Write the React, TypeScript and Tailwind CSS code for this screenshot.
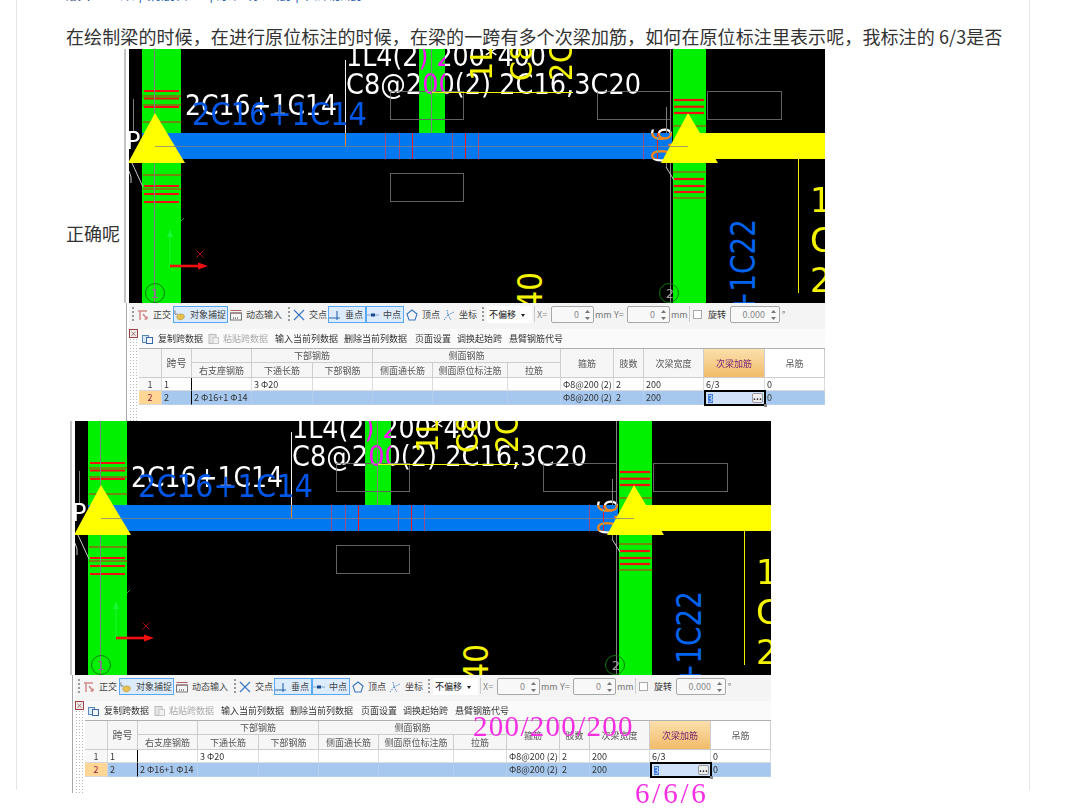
const cjk = "font-['Noto_Sans_CJK_SC','Liberation_Sans',sans-serif]";
const cad = "font-['DejaVu_Sans',sans-serif]";

function TriangleMark({ x }: { x: number }) {
  return <polygon points={`${x},64 ${x - 27},114 ${x + 30},114`} className="fill-[#ffff00]" />;
}

function Stripes({ x1, x2, thick, thin }: { x1: number; x2: number; thick: number[]; thin: number[] }) {
  return (
    <>
      {thin.map((y) => (
        <line key={y} x1={x1 - 1} x2={x2 + 2} y1={y} y2={y} className="stroke-[#e02020]" strokeWidth="1" />
      ))}
      {thick.map((y) => (
        <line key={y} x1={x1} x2={x2} y1={y} y2={y} className="stroke-[#f01010]" strokeWidth="2.2" />
      ))}
    </>
  );
}

function CadCanvas() {
  return (
    <svg viewBox="7 0 696 254" className="isolate block h-[254px] w-[696px] shrink-0">
      <rect x="7" y="0" width="696" height="254" fill="#000" />
      {/* columns */}
      <rect x="20" y="0" width="39" height="254" fill="#00f000" />
      <rect x="297" y="0" width="26" height="84" fill="#00f000" />
      <rect x="551" y="0" width="33" height="254" fill="#00f000" />

      <Stripes x1={22} x2={57} thick={[42, 49.5, 58, 137, 145, 153]} thin={[47, 56, 73, 126, 140]} />
      <Stripes x1={552} x2={582} thick={[51, 57.7, 64, 130, 137, 143]} thin={[77, 123, 137, 149]} />

      {/* outlines */}
      <g fill="none" className="stroke-[#626262]">
        <rect x="268.5" y="42.5" width="73" height="28" />
        <rect x="475.5" y="42.5" width="73" height="28" />
        <rect x="585.5" y="42.5" width="74" height="28" />
        <rect x="268.5" y="124.5" width="73" height="28" />
      </g>
      <line x1="32.5" x2="32.5" y1="0" y2="254" stroke="#808080" />
      <line x1="309.5" x2="309.5" y1="0" y2="97" stroke="#808080" />
      <line x1="548.5" x2="548.5" y1="0" y2="254" stroke="#808080" />
      <line x1="544.5" x2="544.5" y1="58" y2="118" stroke="#808080" />
      <line x1="11.5" x2="11.5" y1="50" y2="82" stroke="#808080" />
      <line x1="676.5" x2="676.5" y1="110" y2="244" stroke="#f0f000" />
      <line x1="223.5" x2="223.5" y1="11" y2="84" stroke="#f0f0f0" />

      {/* beam */}
      <rect x="20" y="84" width="530" height="26" fill="#0078f0" />
      <rect x="570" y="84" width="133" height="26" fill="#ffff00" />
      <line x1="223.5" x2="223.5" y1="84" y2="97" stroke="#f08020" />
      {[263, 277, 330, 356, 521].map((x) => (
        <line key={x} x1={x + 0.5} x2={x + 0.5} y1="84" y2="110" stroke="#9c4c80" />
      ))}
      {[290, 343, 535].map((x) => (
        <line key={x} x1={x + 0.5} x2={x + 0.5} y1="84" y2="110" stroke="#f01818" />
      ))}

      {/* white annotations, inverted over what they cross */}
      <g className={`${cad} fill-white mix-blend-difference`}>
        <text x="224" y="17" className="text-[29px]" textLength="200" lengthAdjust="spacingAndGlyphs">
          1L4(2) 200*400
        </text>
        <text x="224" y="45" className="text-[29px]" textLength="295" lengthAdjust="spacingAndGlyphs">
          C8@200(2) 2C16,3C20
        </text>
        <text x="63" y="66" className="text-[29px]" textLength="152" lengthAdjust="spacingAndGlyphs">
          2C16+1C14
        </text>
        <text
          x="550"
          y="114"
          transform="rotate(-90 550 114)"
          className="text-[28px]"
          textLength="36"
          lengthAdjust="spacingAndGlyphs"
        >
          0.6
        </text>
        <text x="4" y="100" className="text-[24px]">
          P
        </text>
      </g>

      <line x1="310" x2="451" y1="43.5" y2="43.5" stroke="#f4f400" />

      <g className={`${cad} fill-[#0056e6]`}>
        <text x="70" y="76" className="text-[32px]" textLength="175" lengthAdjust="spacingAndGlyphs">
          2C16+1C14
        </text>
        <text
          x="633"
          y="170"
          transform="rotate(-90 633 170)"
          textAnchor="end"
          className="fill-[#0064f0] text-[33px]"
          textLength="96"
          lengthAdjust="spacingAndGlyphs"
        >
          +1C22
        </text>
      </g>

      <g className={`${cad} fill-[#f4f400]`}>
        <text x="370" y="32" transform="rotate(-90 370 32)" className="text-[30px]" textLength="36" lengthAdjust="spacingAndGlyphs">
          1L
        </text>
        <text x="410" y="32" transform="rotate(-90 410 32)" className="text-[30px]" textLength="38" lengthAdjust="spacingAndGlyphs">
          C8
        </text>
        <text x="450" y="32" transform="rotate(-90 450 32)" className="text-[32px]" textLength="38" lengthAdjust="spacingAndGlyphs">
          2C
        </text>
        <text x="420" y="223" transform="rotate(-90 420 223)" textAnchor="end" className="text-[34px]" textLength="58" lengthAdjust="spacingAndGlyphs">
          C40
        </text>
        <text x="688" y="163" className="text-[34px]">
          1
        </text>
        <text x="688" y="203" className="text-[34px]">
          C
        </text>
        <text x="688" y="243" className="text-[34px]">
          2
        </text>
      </g>

      <TriangleMark x={33} />
      <TriangleMark x={566} />
      <line x1="33" x2="566" y1="97.5" y2="97.5" stroke="#808080" strokeOpacity="0.75" />

      {/* leader lines */}
      <path d="M10 114 L21 138 M544 118 L552 131" fill="none" stroke="#c8c8c8" />
      <path d="M7 122 Q10 128 9 134" fill="none" stroke="#c8c8c8" />

      {/* axis bubbles */}
      <circle cx="33" cy="244" r="9.5" fill="none" stroke="#0a7a0a" />
      <text x="33" y="249" textAnchor="middle" className={`${cad} fill-[#a060a0] text-[13px]`}>
        1
      </text>
      <circle cx="547" cy="244" r="9.5" fill="none" stroke="#0a7a0a" />
      <text x="548" y="249" textAnchor="middle" className={`${cad} fill-[#a0a0a0] text-[13px]`}>
        2
      </text>

      {/* ucs arrows */}
      <path d="M48 217 V181" stroke="#18f838" strokeWidth="1" />
      <path d="M48 181 l-3 7 h6 z" fill="#18f838" />
      <path d="M59 172 l3 -3" stroke="#18a018" />
      <path d="M48 217 H76" stroke="#f01010" strokeWidth="2.6" />
      <path d="M76 213.5 L86 217 L76 220.5 Z" fill="#f01010" />
      <path d="M74.5 201.5 l7 7 m0 -7 l-7 7" stroke="#a01010" />
    </svg>
  );
}

function Grip() {
  return (
    <div className="mx-[3px] h-[16px] w-[2px] shrink-0 bg-[radial-gradient(circle,#9a9a9a_1px,transparent_1px)] bg-size-[2px_4px]" />
  );
}

function Tool({
  icon,
  label,
  width,
  active,
}: {
  icon: React.ReactNode;
  label: string;
  width: string;
  active?: boolean;
}) {
  return (
    <div
      className={`flex h-[17px] shrink-0 items-center gap-[4px] text-[9px] text-[#444] ${width} ${
        active ? "border border-[#5aa8f4] bg-[#dcecfc]" : ""
      }`}
    >
      {icon}
      <span className="whitespace-nowrap">{label}</span>
    </div>
  );
}

const OrthoIcon = (
  <svg viewBox="0 0 12 12" className="h-[12px] w-[12px] shrink-0">
    <path d="M1 2 H10 M3 2 V11 M6 5 L10 10 M10 10 V7.5 M10 10 H7.5" fill="none" stroke="#d08a8a" strokeWidth="1.5" />
  </svg>
);
const SnapIcon = (
  <svg viewBox="0 0 13 12" className="h-[12px] w-[12px] shrink-0">
    <path d="M1 1 V5 M1 5 H4" fill="none" stroke="#7a7a7a" />
    <path d="M3 8 Q4 4 8 5 Q12 5 11 9 Q9 12 5 11 Q3 10 3 8 Z" fill="#e8c050" stroke="#a98a30" strokeWidth="0.6" />
  </svg>
);
const DynamicIcon = (
  <svg viewBox="0 0 12 12" className="h-[12px] w-[12px] shrink-0">
    <path d="M0.5 1.5 H11.5 M0.5 4 H11.5" stroke="#b06060" />
    <rect x="0.5" y="4" width="11" height="7" fill="none" stroke="#777" />
    <path d="M3 9 H9" stroke="#333" strokeDasharray="1 1" />
  </svg>
);
const CrossIcon = (
  <svg viewBox="0 0 12 12" className="h-[12px] w-[12px] shrink-0">
    <path d="M1 1 L11 11 M11 1 L1 11" stroke="#3a78c0" strokeWidth="1.2" />
  </svg>
);
const PerpIcon = (
  <svg viewBox="0 0 12 12" className="h-[12px] w-[12px] shrink-0">
    <path d="M0 9 H11 M8 2 V11" fill="none" stroke="#2a68b0" strokeWidth="1.1" />
  </svg>
);
const MidIcon = (
  <svg viewBox="0 0 12 12" className="h-[12px] w-[12px] shrink-0">
    <path d="M0 6 H12" stroke="#7aa0d0" />
    <rect x="4" y="4.5" width="4" height="3" fill="#1a4a90" />
  </svg>
);
const VertexIcon = (
  <svg viewBox="0 0 12 12" className="h-[12px] w-[12px] shrink-0">
    <path d="M6 1 L11 5 L9 11 H3 L1 5 Z" fill="none" stroke="#3a78c0" strokeWidth="1.1" />
  </svg>
);
const CoordIcon = (
  <svg viewBox="0 0 12 12" className="h-[12px] w-[12px] shrink-0">
    <path d="M1 11 L5 6 L4 1 M5 6 L11 3 M5 6 L8 11" fill="none" stroke="#4a88c8" strokeDasharray="1.5 1" />
  </svg>
);

function Spinner({ value, width }: { value: string; width: string }) {
  return (
    <div
      className={`flex h-[17px] shrink-0 items-center justify-end rounded-[2px] border border-[#a8a8a8] bg-[#f8f8f8] text-[9px] text-[#888] ${width}`}
    >
      <span className="mr-[5px]">{value}</span>
      <svg viewBox="0 0 7 12" className="mr-[2px] h-[12px] w-[7px]">
        <path d="M3.5 1 L6 4 H1 Z M3.5 11 L6 8 H1 Z" fill="#777" />
      </svg>
    </div>
  );
}

function Toolbar() {
  return (
    <div className="flex h-[26px] items-start bg-[#f4f4f4] pt-[3px] [&>span]:leading-[17px]">
      <Grip />
      <Tool width="w-[36px]" icon={OrthoIcon} label="正交" />
      <Tool width="w-[55px]" icon={SnapIcon} label="对象捕捉" active />
      <div className="w-[2px]" />
      <Tool width="w-[55px]" icon={DynamicIcon} label="动态输入" />
      <Grip />
      <Tool width="w-[35px]" icon={CrossIcon} label="交点" />
      <Tool width="w-[38px]" icon={PerpIcon} label="垂点" active />
      <Tool width="w-[38px]" icon={MidIcon} label="中点" active />
      <div className="w-[2px]" />
      <Tool width="w-[37px]" icon={VertexIcon} label="顶点" />
      <Tool width="w-[36px]" icon={CoordIcon} label="坐标" />
      <Grip />
      <div className="flex h-[17px] w-[45px] shrink-0 items-center bg-white pl-[2px] text-[9px] text-[#111]">
        不偏移
        <span className="ml-[5px] mt-[1px] h-0 w-0 border-x-[2.5px] border-t-[3px] border-x-transparent border-t-[#222]" />
      </div>
      <div className="mx-[2px] h-[16px] w-px shrink-0 bg-[#ccc]" />
      <span className="w-[14px] shrink-0 text-[9px] text-[#888]">X=</span>
      <Spinner value="0" width="w-[43px]" />
      <span className="w-[20px] shrink-0 pl-[1px] text-[9px] text-[#777]">mm</span>
      <span className="w-[13px] shrink-0 text-[9px] text-[#777]">Y=</span>
      <Spinner value="0" width="w-[43px]" />
      <span className="w-[19px] shrink-0 pl-[1px] text-[9px] text-[#777]">mm</span>
      <div className="h-[16px] w-px shrink-0 bg-[#ccc]" />
      <div className="ml-[3px] mt-[4px] h-[9px] w-[9px] shrink-0 border border-[#a8a8a8] bg-white" />
      <span className="ml-[6px] shrink-0 text-[9px] text-[#333]">旋转</span>
      <div className="w-[4px]" />
      <Spinner value="0.000" width="w-[50px]" />
      <span className="ml-[2px] text-[9px] text-[#777]">°</span>
    </div>
  );
}

function DataBar() {
  return (
    <div className="flex h-[19px] items-center bg-[#fafafa] pl-[3px] text-[9px] text-[#333]">
      <svg viewBox="0 0 11 11" className="mr-[5px] h-[11px] w-[11px] shrink-0">
        <rect x="0.5" y="2.5" width="6" height="7" fill="#dbe8f6" stroke="#5a88b8" />
        <rect x="4.5" y="4.5" width="6" height="6" fill="#f4f8fc" stroke="#3a68a8" />
      </svg>
      <span className="w-[50px] shrink-0">复制跨数据</span>
      <svg viewBox="0 0 11 11" className="mr-[4px] h-[11px] w-[11px] shrink-0">
        <rect x="1" y="1.5" width="7" height="9" fill="#e4e4e4" stroke="#bbb" />
        <rect x="5" y="4.5" width="5.5" height="6" fill="#f0f0f0" stroke="#c8c8c8" />
      </svg>
      <span className="w-[52px] shrink-0 text-[#aaa]">粘贴跨数据</span>
      <span className="w-[69px] shrink-0">输入当前列数据</span>
      <span className="w-[71px] shrink-0">删除当前列数据</span>
      <span className="w-[42px] shrink-0">页面设置</span>
      <span className="w-[52px] shrink-0">调换起始跨</span>
      <span className="shrink-0">悬臂钢筋代号</span>
    </div>
  );
}

const headCell = "flex items-center justify-center border-r border-b border-[#cdcdcd] bg-[#f6f6f6] text-[#555]";
const rowCell = "flex items-center whitespace-nowrap border-r border-b pl-[2px]";

function BeamTable() {
  const rows = [
    ["1", "", "3 Φ20", "", "", "", "", "Φ8@200 (2)", "2", "200", "6/3", "0"],
    ["2", "2 Φ16+1 Φ14", "", "", "", "", "", "Φ8@200 (2)", "2", "200", "3", "0"],
  ];
  return (
    <div className="grid grid-cols-[23px_30px_60px_61px_60px_60px_75px_53px_53px_30px_60px_61px_60px] grid-rows-[14px_15px_13px_14px] border-t border-[#b0b0b0] text-[9px] leading-none">
      <div className={`${headCell} row-span-2`} />
      <div className={`${headCell} row-span-2 text-[10px]`}>跨号</div>
      <div className={headCell} />
      <div className={`${headCell} col-span-2`}>下部钢筋</div>
      <div className={`${headCell} col-span-3`}>侧面钢筋</div>
      <div className={`${headCell} row-span-2`}>箍筋</div>
      <div className={`${headCell} row-span-2`}>肢数</div>
      <div className={`${headCell} row-span-2`}>次梁宽度</div>
      <div className={`${headCell} row-span-2 bg-linear-to-b from-[#fbe0ac] to-[#f1bb68] !text-[#7a2070]`}>次梁加筋</div>
      <div className={`${headCell} row-span-2 bg-white`}>吊筋</div>
      <div className={headCell}>右支座钢筋</div>
      <div className={headCell}>下通长筋</div>
      <div className={headCell}>下部钢筋</div>
      <div className={headCell}>侧面通长筋</div>
      <div className={headCell}>侧面原位标注筋</div>
      <div className={headCell}>拉筋</div>

      {rows.map((row, r) => (
        <div key={r} className="contents">
          <div
            className={`flex items-center justify-center border-r border-b border-[#d8d8d8] ${
              r === 1 ? "bg-[#ffd694] text-[#8a1a40]" : "bg-[#f8f8f8] text-[#444]"
            }`}
          >
            {r + 1}
          </div>
          {row.map((text, c) => {
            const isEditor = r === 1 && c === 10;
            return (
              <div
                key={c}
                className={`${rowCell} relative ${r === 1 ? "border-[#b4cfee] bg-[#a6c8ee]" : "border-[#dcdcdc] bg-white"} ${
                  c === 0 ? "border-r-black" : ""
                } text-[#333]`}
              >
                {isEditor ? (
                  <div className="absolute -top-px left-0 z-10 flex h-[16px] w-[62px] items-center border-2 border-black bg-[#cfe2fa] pl-[2px]">
                    <span className="bg-[#3a78d8] text-[#dbe8fa]">{text}</span>
                    <span className="ml-auto mr-[1px] flex h-[10px] w-[11px] items-center justify-center rounded-[2px] border border-[#999] bg-[#eee] pb-[4px] font-bold leading-none text-[#222]">
                      ...
                    </span>
                    <span className="absolute -bottom-[3px] -right-[3px] h-[3px] w-[3px] bg-[#888]" />
                  </div>
                ) : (
                  text
                )}
              </div>
            );
          })}
        </div>
      ))}
    </div>
  );
}

function Screenshot({ annotated, className }: { annotated?: boolean; className?: string }) {
  return (
    <div className={`relative h-[372px] w-[703px] shrink-0 bg-white ${className ?? ""}`}>
      <div className="flex h-[254px]">
        <div className="flex h-full w-[7px] shrink-0 pl-[2px]">
          <div className="h-full w-[2px] bg-[#c4c4c4]" />
        </div>
        <CadCanvas />
      </div>
      <div className="ml-[4px] h-[118px] border-l border-[#a8a8a8] pl-[2px] blur-[0.3px]">
        <Toolbar />
        <div className="flex h-[92px]">
          <div className="relative mr-px w-[9px] shrink-0 bg-[radial-gradient(circle,#b8b8b8_1px,transparent_1px)] bg-size-[3px_3px]">
            <div className="flex h-[9px] w-[9px] items-center justify-center border border-[#a04040] bg-[#eee] text-[7px] leading-none text-[#803030]">
              ×
            </div>
          </div>
          <div className="w-[686px]">
            <DataBar />
            <BeamTable />
          </div>
        </div>
      </div>
      {annotated && (
        <>
          <span className="absolute left-[405px] top-[286px] font-['Liberation_Serif',serif] text-[29px] leading-[38px] tracking-[1.3px] text-[#f52ee2]">
            200/200/200
          </span>
          <span className="absolute left-[567px] top-[353px] font-['Liberation_Serif',serif] text-[29px] leading-[38px] tracking-[2.8px] text-[#f52ee2]">
            6/6/6
          </span>
        </>
      )}
    </div>
  );
}

export default function App() {
  return (
    <div className={`h-[808px] w-[1070px] overflow-hidden bg-white ${cjk}`}>
      <div className="ml-[16px] h-full w-[1014px] border-x border-[#e6e6e6] pl-[49px] text-[#333]">
        <div className="-mt-[18px] flex h-[22px] items-center whitespace-nowrap text-[15px] leading-[22px] text-[#2d64b3]">
          <span className="w-[54px] text-[#2d4f80]">版本</span>
          <span>梁 | 钢筋算量 | 原位标注筋 | 次梁加筋</span>
        </div>
        <p className="mb-px mt-[20px] whitespace-nowrap text-[18px] leading-[24px] tracking-[0.1px]">
          在绘制梁的时候，在进行原位标注的时候，在梁的一跨有多个次梁加筋，如何在原位标注里表示呢，我标注的 6/3是否
        </p>
        <div className="flex items-center whitespace-nowrap text-[18px] leading-[24px]">
          <span className="pb-[4px]">正确呢</span>
          <Screenshot className="ml-[2px]" />
        </div>
        <Screenshot annotated className="ml-[2px]" />
      </div>
    </div>
  );
}
